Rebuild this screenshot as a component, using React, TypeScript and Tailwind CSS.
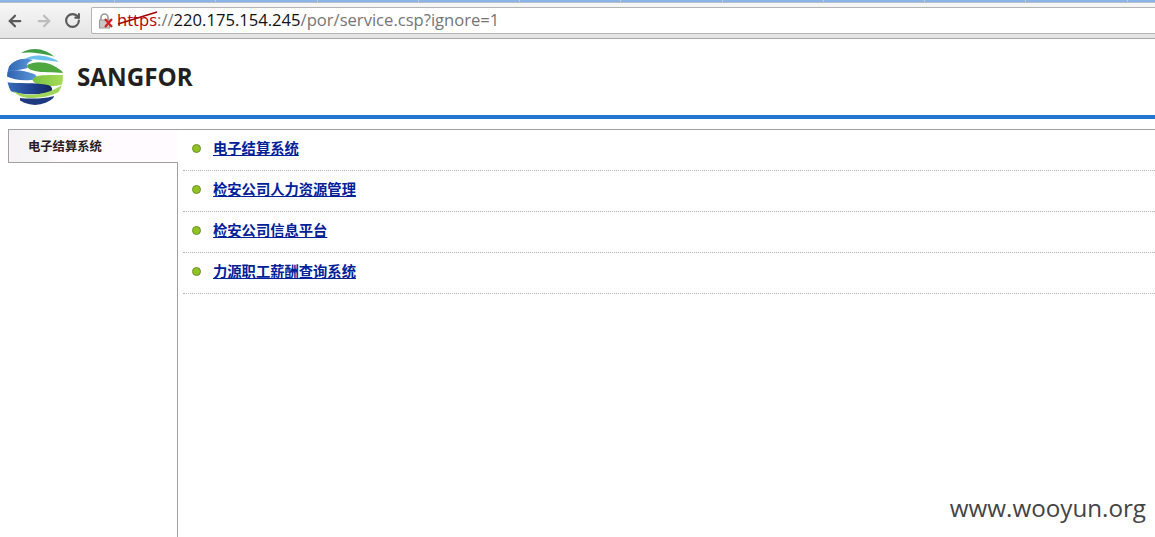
import { ArrowLeft, ArrowRight, RotateCw } from "lucide-react";

const LINKS = [
  "电子结算系统",
  "检安公司人力资源管理",
  "检安公司信息平台",
  "力源职工薪酬查询系统",
];

const TAB_EDGES = [0, 1, 2, 3, 4, 5, 6, 7, 8, 9, 10];

function Globe() {
  return (
    <svg width="58" height="58" viewBox="6 48 58 58" aria-hidden="true">
      <defs>
        <clipPath id="ball">
          <circle cx="35" cy="77" r="28" />
        </clipPath>
        <linearGradient id="blueBand" x1="0" x2="1">
          <stop offset="0" stopColor="#2f5fb0" />
          <stop offset="1" stopColor="#5a9ad8" />
        </linearGradient>
        <linearGradient id="navyBand" x1="0" x2="1">
          <stop offset="0" stopColor="#3a70bd" />
          <stop offset="0.6" stopColor="#1f3f8c" />
          <stop offset="1" stopColor="#14285f" />
        </linearGradient>
        <linearGradient id="limeBand" x1="0" x2="1">
          <stop offset="0" stopColor="#7cc242" />
          <stop offset="1" stopColor="#a6dc5a" />
        </linearGradient>
      </defs>
      <g clipPath="url(#ball)">
        <path d="M15 55 C24 51 36 52 60 58 L60 46 L15 46 Z" fill="#3f9e45" />
        <path d="M25 59 C32 54 46 54 60 62 C50 61 36 59 25 59 Z" fill="#6cc0ee" />
        <path d="M6 71 C10 62 20 56 33 60 C28 62 25 65 28 68 C20 70 12 71 6 71 Z" fill="url(#blueBand)" />
        <path d="M27 65 C36 60 52 61 64 73 C54 72 42 73 35 71 C30 70 27 68 27 65 Z" fill="#4fa83f" />
        <path d="M6 72 C12 69 24 70 34 74 C39 77 37 80 31 80 C20 81 12 79 6 76 Z" fill="url(#blueBand)" />
        <path d="M33 79 C35 74 50 75 64 75 L64 84 C56 87 44 87 37 84 C34 83 32 81 33 79 Z" fill="url(#limeBand)" />
        <path d="M6 82 C16 84 36 82 48 85 C54 87 53 92 48 93 C34 95 18 95 8 90 Z" fill="url(#navyBand)" />
        <path d="M13 91 C26 97 46 96 62 85 L62 90 C52 97 38 98 30 98 C24 98 18 96 13 91 Z" fill="#9fd558" />
        <path d="M20 98 C30 99 44 99 54 96 L50 108 L20 108 Z" fill="#1d3a80" />
      </g>
    </svg>
  );
}

function Toolbar() {
  return (
    <div className="h-[39px] flex flex-col border-b border-b-[#a8a8a8]">
      <div className="h-[3px] flex bg-[#8db4e8] border-b border-b-[#b8bcc4]">
        <div className="w-[115px] shrink-0 border-r border-r-[#c8c8c8]" />
        {TAB_EDGES.map((n) => (
          <div key={n} className="w-[101.25px] shrink-0 border-r border-r-[#c8c8c8]" />
        ))}
      </div>
      <div className="flex-1 bg-gradient-to-b from-[#f7f7f7] to-[#e4e4e4] flex items-center pl-[6px]">
        <ArrowLeft size={18} strokeWidth={3} className="text-[#5a5a5a] mr-[11px]" />
        <ArrowRight size={18} strokeWidth={3} className="text-[#bdbdbd] mr-[11px]" />
        <RotateCw size={17} strokeWidth={3} className="text-[#5a5a5a] mr-[10px]" />
        <div className="flex-1 h-[27px] bg-white border border-[#b4b4b4] border-r-0 rounded-l-[2px] flex items-center pl-[6px] font-['Open_Sans',sans-serif] text-[16.6px] text-[#757575] whitespace-nowrap">
          <span className="w-[19px] h-[16px] shrink-0">
            <svg width="18" height="16" viewBox="0 0 18 16" aria-hidden="true">
              <path d="M3 7 V4.5 a3.5 3.5 0 0 1 7 0 V7" fill="none" stroke="#9a9a9a" strokeWidth="1.6" />
              <rect x="1.5" y="7" width="10" height="8" fill="#c8c8c8" stroke="#9a9a9a" />
              <path d="M7 6 L14 14 M14 6 L7 14" stroke="#d42020" strokeWidth="2.2" />
            </svg>
          </span>
          <span className="relative text-[#b40000]">
            https
            <svg
              className="absolute left-0 top-[1px]"
              width="42"
              height="20"
              viewBox="0 0 42 20"
              aria-hidden="true"
            >
              <path d="M1 15 L40 3" stroke="#a80000" strokeWidth="1.6" fill="none" />
            </svg>
          </span>
          <span>://</span>
          <span className="text-[#111111]">220.175.154.245</span>
          <span>/por/service.csp?ignore=1</span>
        </div>
      </div>
    </div>
  );
}

export default function App() {
  return (
    <div className="relative h-[537px] overflow-hidden bg-white font-['Noto_Sans_CJK_SC',sans-serif]">
      <Toolbar />
      <div className="h-[76px] flex items-center pl-[6px] gap-[13px]">
        <Globe />
        <span className="font-['Open_Sans',sans-serif] font-bold text-[24.2px] text-[#231f20] leading-none">
          SANGFOR
        </span>
      </div>
      <div className="h-[4px] bg-[#2277d1]" />
      <div className="mt-[10px] ml-[8px] h-[408px] border-t border-[#a0a0a0] flex">
        <div className="w-[169px] shrink-0 border-l border-b border-[#a0a0a0] h-[33px] bg-gradient-to-r from-[#f6f2f6] via-[#f6f6f6] via-20% to-[#fffbff] to-30% pl-[19px] pt-[7px] text-[12.3px] leading-[18px] font-bold text-[#2b1a20]">
          电子结算系统
        </div>
        <div className="flex-1 flex">
          <div className="w-px bg-[#a0a0a0] mt-[32px]" />
          <ul className="flex-1 ml-[5px]">
            {LINKS.map((label) => (
              <li
                key={label}
                className="h-[41px] border-b border-dotted border-[#b4b4b4] flex items-center pl-[9px]"
              >
                <span className="w-[9px] h-[9px] shrink-0 rounded-full bg-[#8fc31f] border border-[#6f8f30] mr-[12px] -mt-[4px]" />
                <a className="text-[14.3px] font-bold text-[#00209a] underline leading-none -mt-[4px]">
                  {label}
                </a>
              </li>
            ))}
          </ul>
        </div>
      </div>
      <span className="absolute right-[9px] bottom-[17px] font-['Open_Sans',sans-serif] text-[24.2px] leading-none text-[#444444]">
        www.wooyun.org
      </span>
    </div>
  );
}
